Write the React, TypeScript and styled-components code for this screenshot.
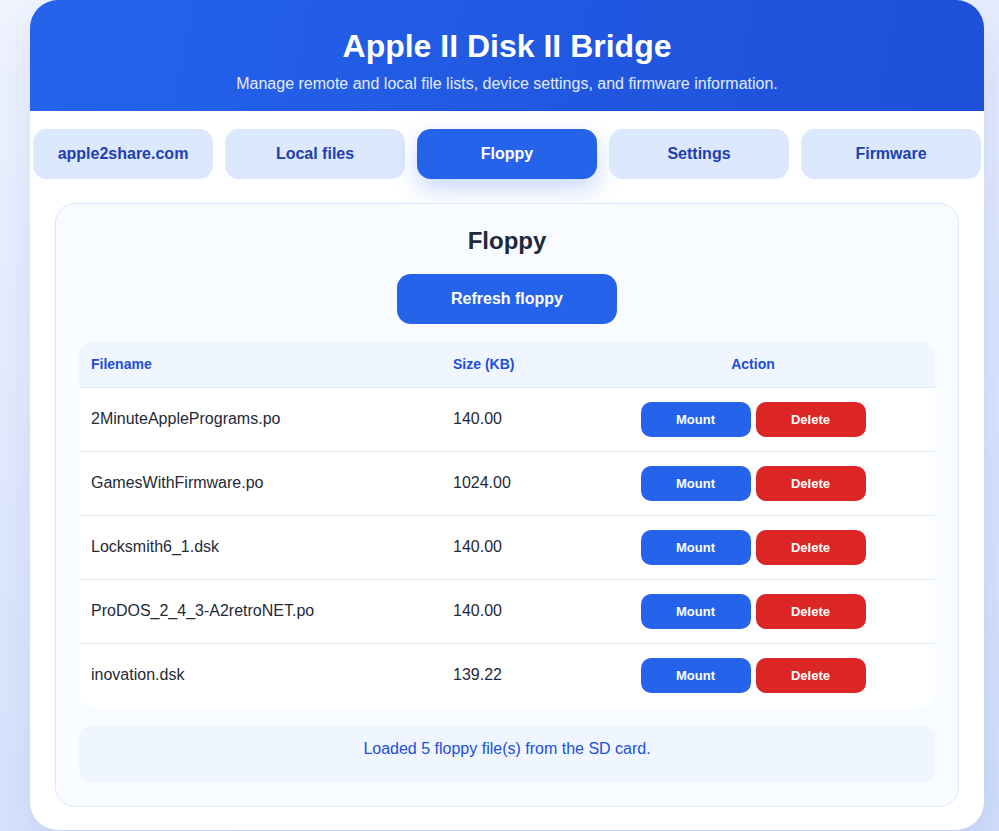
import React from "react";
import styled, { createGlobalStyle } from "styled-components";

const Global = createGlobalStyle`
  html, body { margin: 0; padding: 0; }
  body {
    font-family: "Liberation Sans", Arial, sans-serif;
    background: linear-gradient(160deg, #f1f5ff 0%, #dde7fd 55%, #d2dffb 100%);
    min-height: 831px;
  }
  * { box-sizing: border-box; }
`;

const Page = styled.div`
  padding: 0 15px 0 30px;
  height: 831px;
  overflow: hidden;
`;

const Card = styled.div`
  width: 954px;
  height: 830px;
  background: #ffffff;
  border-radius: 28px;
  overflow: hidden;
  box-shadow: 0 20px 50px rgba(30, 64, 175, 0.12);
  display: flex;
  flex-direction: column;
`;

const Header = styled.header`
  background: linear-gradient(100deg, #2563eb 0%, #1e4fd8 100%);
  color: #ffffff;
  text-align: center;
  padding: 28px 20px 19px;
  height: 111px;
`;

const Title = styled.h1`
  margin: 0 0 10px;
  font-size: 32px;
  line-height: 37px;
  font-weight: 700;
`;

const Subtitle = styled.p`
  margin: 0;
  font-size: 16px;
  line-height: 18px;
  color: #e3ecff;
`;

const Tabs = styled.nav`
  display: grid;
  grid-template-columns: repeat(5, 1fr);
  gap: 12px;
  padding: 18px 3px 0;
`;

const Tab = styled.button<{ $active?: boolean }>`
  height: 50px;
  border: none;
  border-radius: 14px;
  font-family: inherit;
  font-size: 16px;
  font-weight: 700;
  cursor: pointer;
  background: ${(p) => (p.$active ? "#2563eb" : "#dbe8fe")};
  color: ${(p) => (p.$active ? "#ffffff" : "#1e40af")};
  box-shadow: ${(p) => (p.$active ? "0 10px 24px rgba(37, 99, 235, 0.25)" : "none")};
`;

const Panel = styled.section`
  margin: 24px 25px 0;
  background: #f8fbff;
  border: 1px solid #dbe7fb;
  border-radius: 20px;
  padding: 23px 23px 24px;
  display: flex;
  flex-direction: column;
  align-items: center;
`;

const PanelTitle = styled.h2`
  margin: 0 0 19px;
  font-size: 24px;
  line-height: 28px;
  font-weight: 700;
  color: #1e293b;
`;

const PrimaryButton = styled.button`
  width: 220px;
  height: 50px;
  border: none;
  border-radius: 14px;
  background: #2563eb;
  color: #ffffff;
  font-family: inherit;
  font-size: 16px;
  font-weight: 700;
  cursor: pointer;
  margin-bottom: 18px;
`;

const TableWrap = styled.div`
  width: 100%;
  background: #ffffff;
  border-radius: 14px;
  overflow: hidden;
`;

const Table = styled.table`
  width: 100%;
  border-collapse: collapse;
  table-layout: fixed;
`;

const Th = styled.th<{ $center?: boolean }>`
  height: 45px;
  padding: 0 12px;
  background: #eff6ff;
  color: #1d4ed8;
  font-size: 14px;
  font-weight: 700;
  text-align: ${(p) => (p.$center ? "center" : "left")};
  border-bottom: 1px solid #e3ebf7;
`;

const Tr = styled.tr`
  &:not(:last-child) td { border-bottom: 1px solid #e3ebf7; }
`;

const Td = styled.td<{ $center?: boolean }>`
  height: 64px;
  padding: 0 12px;
  font-size: 16px;
  color: #1f2937;
  text-align: ${(p) => (p.$center ? "center" : "left")};
`;

const Actions = styled.div`
  display: flex;
  justify-content: center;
  gap: 5px;
`;

const SmallButton = styled.button<{ $danger?: boolean }>`
  width: 110px;
  height: 35px;
  border: none;
  border-radius: 10px;
  background: ${(p) => (p.$danger ? "#dc2626" : "#2563eb")};
  color: #ffffff;
  font-family: inherit;
  font-size: 13px;
  font-weight: 700;
  cursor: pointer;
`;

const Status = styled.div`
  width: 100%;
  margin-top: 19px;
  height: 56px;
  padding: 14px 16px 0;
  border-radius: 12px;
  background: #eff6ff;
  color: #1d4ed8;
  font-size: 16px;
  line-height: 18px;
  text-align: center;
`;

const tabs = ["apple2share.com", "Local files", "Floppy", "Settings", "Firmware"];

const files = [
  { name: "2MinuteApplePrograms.po", size: "140.00" },
  { name: "GamesWithFirmware.po", size: "1024.00" },
  { name: "Locksmith6_1.dsk", size: "140.00" },
  { name: "ProDOS_2_4_3-A2retroNET.po", size: "140.00" },
  { name: "inovation.dsk", size: "139.22" },
];

export default function App() {
  return (
    <>
      <Global />
      <Page>
        <Card>
          <Header>
            <Title>Apple II Disk II Bridge</Title>
            <Subtitle>Manage remote and local file lists, device settings, and firmware information.</Subtitle>
          </Header>
          <Tabs>
            {tabs.map((t) => (
              <Tab key={t} $active={t === "Floppy"}>
                {t}
              </Tab>
            ))}
          </Tabs>
          <Panel>
            <PanelTitle>Floppy</PanelTitle>
            <PrimaryButton>Refresh floppy</PrimaryButton>
            <TableWrap>
              <Table>
                <colgroup>
                  <col style={{ width: 362 }} />
                  <col style={{ width: 130 }} />
                  <col />
                </colgroup>
                <thead>
                  <tr>
                    <Th>Filename</Th>
                    <Th>Size (KB)</Th>
                    <Th $center>Action</Th>
                  </tr>
                </thead>
                <tbody>
                  {files.map((f) => (
                    <Tr key={f.name}>
                      <Td>{f.name}</Td>
                      <Td>{f.size}</Td>
                      <Td $center>
                        <Actions>
                          <SmallButton>Mount</SmallButton>
                          <SmallButton $danger>Delete</SmallButton>
                        </Actions>
                      </Td>
                    </Tr>
                  ))}
                </tbody>
              </Table>
            </TableWrap>
            <Status>Loaded 5 floppy file(s) from the SD card.</Status>
          </Panel>
        </Card>
      </Page>
    </>
  );
}
